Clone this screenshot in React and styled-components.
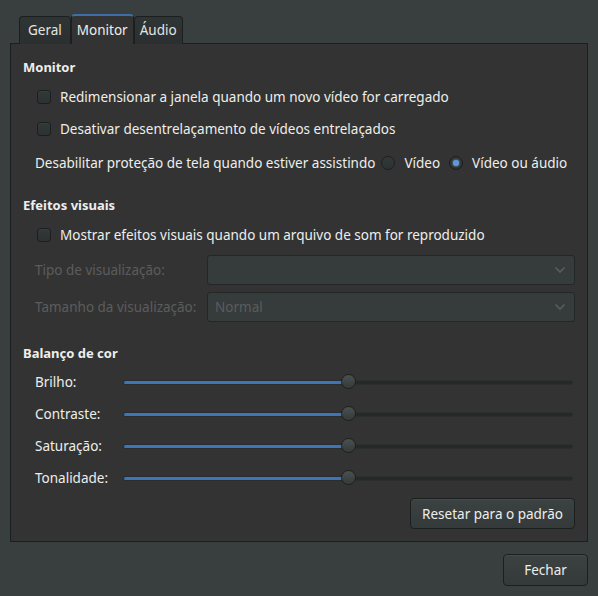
import React from "react";
import styled, { createGlobalStyle } from "styled-components";

const Global = createGlobalStyle`
  html, body { margin: 0; padding: 0; }
  body {
    background: #393f3f;
    font-family: "Noto Sans", "Open Sans", sans-serif;
    font-size: 13.5px;
    color: #eeeeec;
    width: 598px;
    height: 596px;
    overflow: hidden;
  }
`;

const Window = styled.div`
  width: 598px;
  height: 596px;
  box-sizing: border-box;
  padding: 14px 10px 0 10px;
  display: flex;
  flex-direction: column;
`;

const TabBar = styled.div`
  display: flex;
  align-items: flex-end;
  height: 29px;
  padding-left: 9px;
`;

const Tab = styled.div`
  box-sizing: border-box;
  height: ${(p) => (p.$active ? "30px" : "28px")};
  padding: 0 ${(p) => p.$pad}px;
  display: flex;
  align-items: center;
  justify-content: center;
  border: 1px solid #1c1f1f;
  border-bottom: none;
  border-radius: 4px 4px 0 0;
  margin-bottom: -1px;
  position: relative;
  z-index: ${(p) => (p.$active ? 2 : 1)};
  background: ${(p) =>
    p.$active ? "#333333" : "linear-gradient(#2f3434, #2b2f2f)"};
  color: ${(p) => (p.$active ? "#eeeeec" : "#e4e4e2")};
  border-top: ${(p) => (p.$active ? "2px solid #3d6ea8" : "1px solid #1c1f1f")};
  padding-bottom: 1px;
`;

const Panel = styled.div`
  box-sizing: border-box;
  height: 499px;
  border: 1px solid #1c1f1f;
  background: #333333;
  padding: 12px 12px 0 12px;
  display: flex;
  flex-direction: column;
`;

const Heading = styled.div`
  height: 22px;
  line-height: 22px;
  font-weight: bold;
  font-size: 13px;
  margin-top: ${(p) => p.$top || 0}px;
`;

const Row = styled.label`
  display: flex;
  align-items: center;
  height: 32px;
  padding-left: 14px;
  gap: 9px;
  margin-top: ${(p) => p.$top || 0}px;
`;

const Check = styled.span`
  width: 14px;
  height: 14px;
  box-sizing: border-box;
  border: 1px solid #1c1f1f;
  border-radius: 3px;
  background: linear-gradient(#323737, #2d3131);
  box-shadow: inset 0 1px 0 rgba(255, 255, 255, 0.04);
  flex: none;
`;

const Radio = styled.span`
  width: 14px;
  height: 14px;
  box-sizing: border-box;
  border: 1px solid #1c1f1f;
  border-radius: 50%;
  background: linear-gradient(#323737, #2d3131);
  flex: none;
  display: flex;
  align-items: center;
  justify-content: center;
  margin: 0 9px 0 ${(p) => p.$ml || 0}px;
  &::after {
    content: "";
    display: ${(p) => (p.$on ? "block" : "none")};
    width: 6px;
    height: 6px;
    border-radius: 50%;
    background: #5f97d8;
    box-shadow: 0 0 2px #89b7ee;
  }
`;

const RadioRow = styled.div`
  display: flex;
  align-items: center;
  height: 33px;
  padding-left: 12px;
  margin-top: 1px;
  white-space: nowrap;
`;

const FieldRow = styled.div`
  display: grid;
  grid-template-columns: 172px 1fr;
  align-items: center;
  height: 30px;
  padding-left: 12px;
  margin-top: ${(p) => p.$top || 0}px;
  color: #5b5d5d;
`;

const Combo = styled.div`
  box-sizing: border-box;
  height: 30px;
  border: 1px solid #232727;
  border-radius: 3px;
  background: #363b3b;
  display: flex;
  align-items: center;
  justify-content: space-between;
  padding: 0 8px 0 7px;
  color: #5b5d5d;
`;

const SliderRow = styled.div`
  display: grid;
  grid-template-columns: 89px 1fr;
  align-items: center;
  height: 32px;
  padding-left: 12px;
  padding-right: 3px;
  margin-top: ${(p) => p.$top || 0}px;
`;

const Track = styled.div`
  position: relative;
  height: 3px;
  background: #252929;
  border-radius: 2px;
  box-shadow: 0 0 0 1px #2a2e2e;
`;

const Fill = styled.div`
  height: 3px;
  border-radius: 2px;
  background: #3e74b8;
`;

const Knob = styled.span`
  position: absolute;
  top: 50%;
  width: 15px;
  height: 15px;
  margin: -8px 0 0 -7px;
  border-radius: 50%;
  box-sizing: border-box;
  border: 1px solid #1c1f1f;
  background: linear-gradient(#4a5050, #353a3a);
`;

const ButtonRow = styled.div`
  display: flex;
  justify-content: flex-end;
  margin-top: 4px;
`;

const Button = styled.button`
  box-sizing: border-box;
  height: ${(p) => p.$h || 31}px;
  width: ${(p) => p.$w}px;
  border: 1px solid #1c1f1f;
  border-radius: 4px;
  background: linear-gradient(#3c4242, #343939);
  color: #eeeeec;
  font-family: inherit;
  font-size: 13.5px;
  padding: 0;
  box-shadow: inset 0 1px 0 rgba(255, 255, 255, 0.05);
`;

const Footer = styled.div`
  display: flex;
  justify-content: flex-end;
  padding-top: 12px;
`;

const Chevron = () => (
  <svg width="12" height="8" viewBox="0 0 12 8">
    <path d="M1.5 1.5 L6 6 L10.5 1.5" fill="none" stroke="#595c5c" strokeWidth="1.6" />
  </svg>
);

const Slider = ({ label, value, top }) => (
  <SliderRow $top={top}>
    <span>{label}</span>
    <Track>
      <Fill style={{ width: `${value}%` }} />
      <Knob style={{ left: `${value}%` }} />
    </Track>
  </SliderRow>
);

export default function App() {
  return (
    <>
      <Global />
      <Window>
        <TabBar>
          <Tab $pad={8}>Geral</Tab>
          <Tab $active $pad={5}>Monitor</Tab>
          <Tab $pad={5}>Áudio</Tab>
        </TabBar>
        <Panel>
          <Heading>Monitor</Heading>
          <Row $top={3}>
            <Check />
            <span>Redimensionar a janela quando um novo vídeo for carregado</span>
          </Row>
          <Row>
            <Check />
            <span>Desativar desentrelaçamento de vídeos entrelaçados</span>
          </Row>
          <RadioRow>
            <span>Desabilitar proteção de tela quando estiver assistindo</span>
            <Radio $ml={6} />
            <span>Vídeo</span>
            <Radio $ml={9} $on />
            <span>Vídeo ou áudio</span>
          </RadioRow>
          <Heading $top={15}>Efeitos visuais</Heading>
          <Row $top={3}>
            <Check />
            <span>Mostrar efeitos visuais quando um arquivo de som for reproduzido</span>
          </Row>
          <FieldRow $top={4}>
            <span>Tipo de visualização:</span>
            <Combo>
              <span />
              <Chevron />
            </Combo>
          </FieldRow>
          <FieldRow $top={7}>
            <span>Tamanho da visualização:</span>
            <Combo>
              <span>Normal</span>
              <Chevron />
            </Combo>
          </FieldRow>
          <Heading $top={20}>Balanço de cor</Heading>
          <Slider label="Brilho:" value={50} top={2} />
          <Slider label="Contraste:" value={50} />
          <Slider label="Saturação:" value={50} />
          <Slider label="Tonalidade:" value={50} />
          <ButtonRow>
            <Button $w={165} $h={31}>Resetar para o padrão</Button>
          </ButtonRow>
        </Panel>
        <Footer>
          <Button $w={85} $h={32}>Fechar</Button>
        </Footer>
      </Window>
    </>
  );
}
